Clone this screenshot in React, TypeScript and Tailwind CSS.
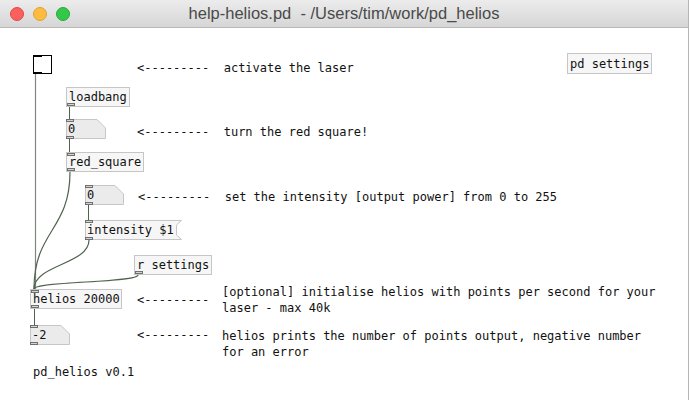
import React from "react";

type Kind = "obj" | "msg" | "num";

const mono = "font-['DejaVu_Sans_Mono',monospace] text-[12px] text-[#111]";

function Port({ bottom = false }: { bottom?: boolean }) {
  return (
    <div
      className={`absolute left-0 w-[8px] h-[3px] border border-[#6f6f6f] bg-[#d4d4d4] ${
        bottom ? "bottom-0" : "top-0"
      }`}
    />
  );
}

function Node({
  pos,
  w,
  h = 20,
  text,
  kind = "obj",
  inlet = false,
  outlet = false,
}: {
  pos: string;
  w: number;
  h?: number;
  text: string;
  kind?: Kind;
  inlet?: boolean;
  outlet?: boolean;
}) {
  const box =
    kind === "obj" ? "border border-[#c6c6c6] bg-[#f5f6f5]" : "";
  return (
    <div className={`absolute ${pos} ${box} ${mono} flex items-center pl-[2px] leading-none whitespace-pre`}>
      {kind === "num" && (
        <svg className="absolute inset-0 overflow-visible" width={w} height={h}>
          <polygon
            points={`0.5,0.5 ${w - 9},0.5 ${w - 0.5},9 ${w - 0.5},${h - 0.5} 0.5,${h - 0.5}`}
            fill="#ebebeb"
            stroke="#c6c6c6"
          />
        </svg>
      )}
      {kind === "msg" && (
        <svg className="absolute inset-0 overflow-visible" width={w + 5} height={h}>
          <polygon
            points={`0.5,0.5 ${w + 4.5},0.5 ${w - 0.5},5 ${w - 0.5},${h - 5} ${w + 4.5},${h - 0.5} 0.5,${h - 0.5}`}
            fill="#f5f6f5"
            stroke="#c6c6c6"
          />
        </svg>
      )}
      <span className="relative">{text}</span>
      {inlet && <Port />}
      {outlet && <Port bottom />}
    </div>
  );
}

function Comment({ pos, children }: { pos: string; children: React.ReactNode }) {
  return <div className={`absolute ${pos} ${mono} leading-[16px] whitespace-pre`}>{children}</div>;
}

function cord(x1: number, y1: number, x2: number, y2: number) {
  const k = Math.max((y2 - y1) * 0.5, 8);
  return `M ${x1} ${y1} C ${x1} ${y1 + k}, ${x2} ${y2 - k}, ${x2} ${y2}`;
}

export default function App() {
  return (
    <div className="w-[689px] h-[400px] bg-white overflow-hidden flex flex-col border-r border-[#b5b5b5]">
      {/* title bar */}
      <div className="h-[28px] shrink-0 relative flex items-center justify-center bg-gradient-to-b from-[#ececec] to-[#d6d6d6] border-b border-[#b9b9b9]">
        <div className="absolute left-[10px] top-[7px] flex gap-[9px]">
          <div className="w-[14px] h-[14px] rounded-full bg-[#fc605c] border border-[#de4a45]" />
          <div className="w-[14px] h-[14px] rounded-full bg-[#fdbc40] border border-[#dea235]" />
          <div className="w-[14px] h-[14px] rounded-full bg-[#34c84a] border border-[#27aa35]" />
        </div>
        <span className="font-['Liberation_Sans',Arial,sans-serif] text-[16.5px] text-[#4a4a4a] whitespace-pre">
          help-helios.pd  - /Users/tim/work/pd_helios
        </span>
      </div>

      {/* patch canvas */}
      <div className="relative flex-1">
        <svg className="absolute inset-0" width={689} height={372} viewBox="0 28 689 372" fill="none">
          <path d="M 35.5 74 L 35.5 289" stroke="#7d887d" strokeWidth={1.2} />
          <path d="M 69.5 107 L 69.5 119" stroke="#4f634f" />
          <path d="M 69.5 139 L 69.5 152" stroke="#4f634f" />
          <path d="M 88.5 205 L 88.5 220" stroke="#4f634f" />
          <path d="M 34.5 309 L 34.5 325" stroke="#4f634f" />
          <path d={cord(70, 172, 34, 289)} stroke="#4f634f" strokeWidth={1.2} />
          <path d={cord(89, 240, 34, 289)} stroke="#4f634f" strokeWidth={1.2} />
          <path d={cord(138, 275, 34, 289)} stroke="#4f634f" strokeWidth={1.2} />
        </svg>

        {/* toggle */}
        <div className="absolute left-[33px] top-[27px] w-[19px] h-[19px] border border-black bg-white">
          <div className="absolute left-0 top-0 w-[8px] h-[1px] bg-black" />
          <div className="absolute left-0 bottom-0 w-[8px] h-[1px] bg-black" />
        </div>

        <Node pos="left-[66px] top-[59px] w-[64px] h-[20px]" w={64} text="loadbang" outlet />
        <Node pos="left-[66px] top-[91px] w-[40px] h-[20px]" w={40} text="0" kind="num" inlet outlet />
        <Node pos="left-[66px] top-[124px] w-[78px] h-[20px]" w={78} text="red_square" inlet outlet />
        <Node pos="left-[85px] top-[157px] w-[39px] h-[20px]" w={39} text="0" kind="num" inlet outlet />
        <Node pos="left-[85px] top-[192px] w-[92px] h-[20px]" w={92} text="intensity $1" kind="msg" inlet outlet />
        <Node pos="left-[134px] top-[227px] w-[78px] h-[20px]" w={78} text="r settings" outlet />
        <Node pos="left-[30px] top-[261px] w-[92px] h-[20px]" w={92} text="helios 20000" inlet outlet />
        <Node pos="left-[30px] top-[297px] w-[40px] h-[20px]" w={40} text="-2" kind="num" inlet outlet />
        <Node pos="left-[567px] top-[25px] w-[85px] h-[21px]" w={85} h={21} text="pd settings" />

        <Comment pos="left-[137px] top-[32px]">{"<---------  activate the laser"}</Comment>
        <Comment pos="left-[137px] top-[96px]">{"<---------  turn the red square!"}</Comment>
        <Comment pos="left-[138px] top-[161px]">
          {"<---------  set the intensity [output power] from 0 to 255"}
        </Comment>
        <Comment pos="left-[137px] top-[264px]">{"<---------"}</Comment>
        <Comment pos="left-[222px] top-[256px]">
          {"[optional] initialise helios with points per second for your"}
          <br />
          {"laser - max 40k"}
        </Comment>
        <Comment pos="left-[137px] top-[299px]">{"<---------"}</Comment>
        <Comment pos="left-[222px] top-[300px]">
          {"helios prints the number of points output, negative number"}
          <br />
          {"for an error"}
        </Comment>
        <Comment pos="left-[33px] top-[336px]">{"pd_helios v0.1"}</Comment>
      </div>
    </div>
  );
}
